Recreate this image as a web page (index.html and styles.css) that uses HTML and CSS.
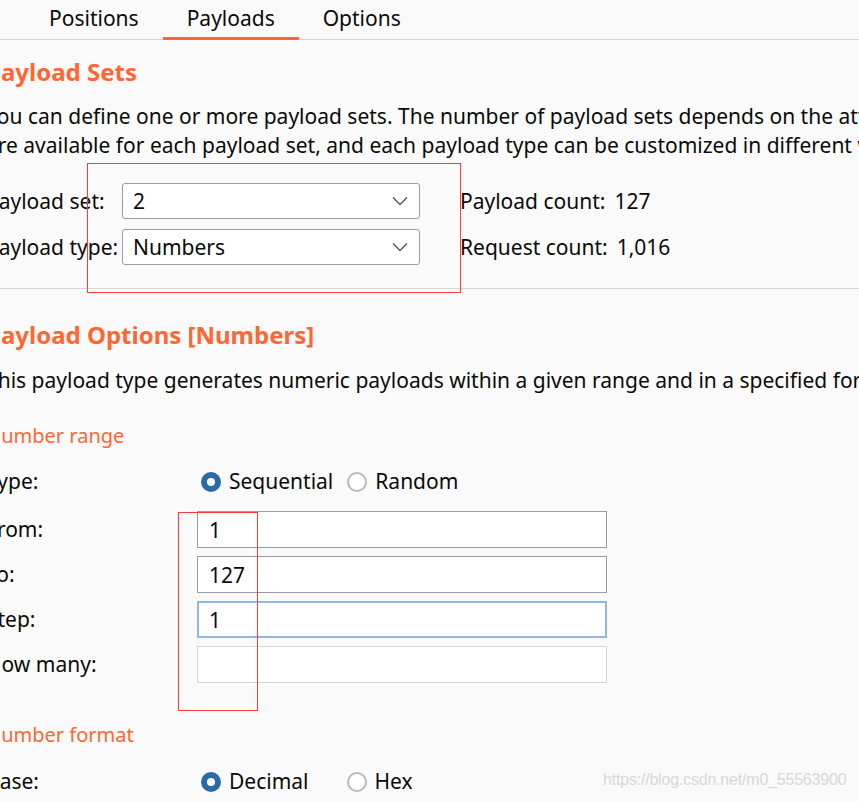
FILE: index.html
```html
<!DOCTYPE html>
<html lang="en">
<head>
    <meta charset="UTF-8">
    <meta name="viewport" content="width=device-width, initial-scale=1.0">
    <title>Intruder - Payloads</title>
    <link rel="stylesheet" href="styles.css">
</head>
<body>

    <!-- tab bar -->
    <div class="tabs">
        <div class="tab">Positions</div>
        <div class="tab active">Payloads</div>
        <div class="tab">Options</div>
    </div>

    <div class="panel">

        <!-- Payload Sets -->
        <h2 class="title first">Payload Sets</h2>
        <p class="desc">You can define one or more payload sets. The number of payload sets depends on the attack type defined in the Positions tab. Various payload types<br>are available for each payload set, and each payload type can be customized in different ways.</p>

        <div class="set-grid">
            <label>Payload set:</label>
            <div class="select"><span>2</span><svg class="chev" viewBox="0 0 16 10"><path d="M1 1.5 L8 8.5 L15 1.5" /></svg></div>
            <div class="info"><span>Payload count:</span><span>127</span></div>

            <label>Payload type:</label>
            <div class="select"><span>Numbers</span><svg class="chev" viewBox="0 0 16 10"><path d="M1 1.5 L8 8.5 L15 1.5" /></svg></div>
            <div class="info"><span>Request count:</span><span>1,016</span></div>
        </div>

        <div class="sep"></div>

        <!-- Payload Options -->
        <h2 class="title">Payload Options [Numbers]</h2>
        <p class="desc single">This payload type generates numeric payloads within a given range and in a specified format.</p>

        <h3 class="sub">Number range</h3>
        <div class="form-grid">
            <label>Type:</label>
            <div class="radios">
                <span class="radio on"></span><span class="rlabel">Sequential</span>
                <span class="radio"></span><span class="rlabel">Random</span>
            </div>
        </div>
        <div class="form-grid fields">
            <label>From:</label>
            <div class="field">1</div>
            <label>To:</label>
            <div class="field">127</div>
            <label>Step:</label>
            <div class="field focus">1</div>
            <label>How many:</label>
            <div class="field disabled"></div>
        </div>

        <h3 class="sub format">Number format</h3>
        <div class="form-grid base">
            <label>Base:</label>
            <div class="radios">
                <span class="radio on"></span><span class="rlabel">Decimal</span>
                <span class="radio gap"></span><span class="rlabel">Hex</span>
            </div>
        </div>
    </div>

    <!-- annotation boxes drawn over the screenshot -->
    <div class="mark mark-set"></div>
    <div class="mark mark-range"></div>
    <div class="watermark">https://blog.csdn.net/m0_55563900</div>

</body>
</html>
```

FILE: styles.css
```css
body {
    font-family: 'Noto Sans', 'Open Sans', sans-serif;
    font-size: 21px;
    color: #0a0a0a;
    background-color: #fafafa;
    margin: 0;
    padding: 0;
    width: 859px;
    height: 801px;
    overflow: hidden;
    position: relative;
}

/* tabs */
.tabs {
    display: flex;
    height: 39px;
    padding-left: 25px;
    border-bottom: 1px solid #d6d6d6;
}

.tab {
    padding: 0 24px;
    line-height: 37px;
    height: 37px;
    margin-bottom: -1px;
    border-bottom: 3px solid transparent;
}

.tab.active {
    border-bottom-color: #ff6633;
}

.panel {
    margin-left: -14px;
}

.title {
    color: #ff6633;
    font-size: 24px;
    font-weight: bold;
    line-height: 32px;
    margin: 30px 0 0 0;
}

.title.first {
    margin-top: 16px;
}

.desc {
    line-height: 29px;
    margin: 14px 0 0 0;
    white-space: nowrap;
}

.desc.single {
    margin-top: 15px;
}

.set-grid {
    display: grid;
    grid-template-columns: 136px 298px auto;
    row-gap: 10px;
    align-items: center;
    margin-top: 23px;
}

.select {
    height: 34px;
    background: #fff;
    border: 1px solid #9a9aa8;
    border-radius: 3px;
    display: flex;
    align-items: center;
    justify-content: space-between;
    padding: 0 11px 0 10px;
}

.chev {
    width: 16px;
    height: 10px;
    fill: none;
    stroke: #555;
    stroke-width: 1.3;
}

.info {
    display: flex;
    gap: 9px;
    margin-left: 40px;
}

.sep {
    height: 1px;
    background: #d6d6d6;
    margin: 23px 0 0 14px;
}

.sub {
    color: #ff6633;
    font-size: 20px;
    font-weight: normal;
    line-height: 29px;
    margin: 26px 0 0 0;
}

.sub.format {
    margin-top: 37px;
}

.form-grid {
    display: grid;
    grid-template-columns: 211px 410px;
    align-items: center;
    margin-top: 17px;
    line-height: 29px;
}

.form-grid.fields {
    margin-top: 15px;
    row-gap: 8px;
}

.form-grid.base {
    margin-top: 18px;
}

.radios {
    display: flex;
    align-items: center;
    padding-left: 4px;
}

.radio {
    width: 16px;
    height: 16px;
    border: 2px solid #b9b9b9;
    border-radius: 50%;
    background: #fff;
    margin-right: 8px;
}

.radio.on {
    width: 8px;
    height: 8px;
    border: 6px solid #2c6aa5;
}

.rlabel {
    margin-right: 14px;
}

.radio.gap {
    margin-left: 24px;
}

.field {
    height: 35px;
    line-height: 37px;
    background: #fff;
    border: 1px solid #9a9aa8;
    padding-left: 11px;
}

.field.focus {
    border: 2px solid #8fb8e6;
    height: 33px;
    line-height: 35px;
    padding-left: 10px;
}

.field.disabled {
    border-color: #d4d4d4;
}

/* red annotation boxes */
.mark {
    position: absolute;
    border: 1px solid #ff3b3b;
}

.mark-set {
    left: 87px;
    top: 163px;
    width: 372px;
    height: 128px;
}

.mark-range {
    left: 178px;
    top: 512px;
    width: 78px;
    height: 197px;
}

.watermark {
    position: absolute;
    left: 603px;
    top: 771px;
    font-family: 'Liberation Sans', sans-serif;
    font-size: 16px;
    color: #d8d8d8;
    letter-spacing: -0.2px;
}
```
